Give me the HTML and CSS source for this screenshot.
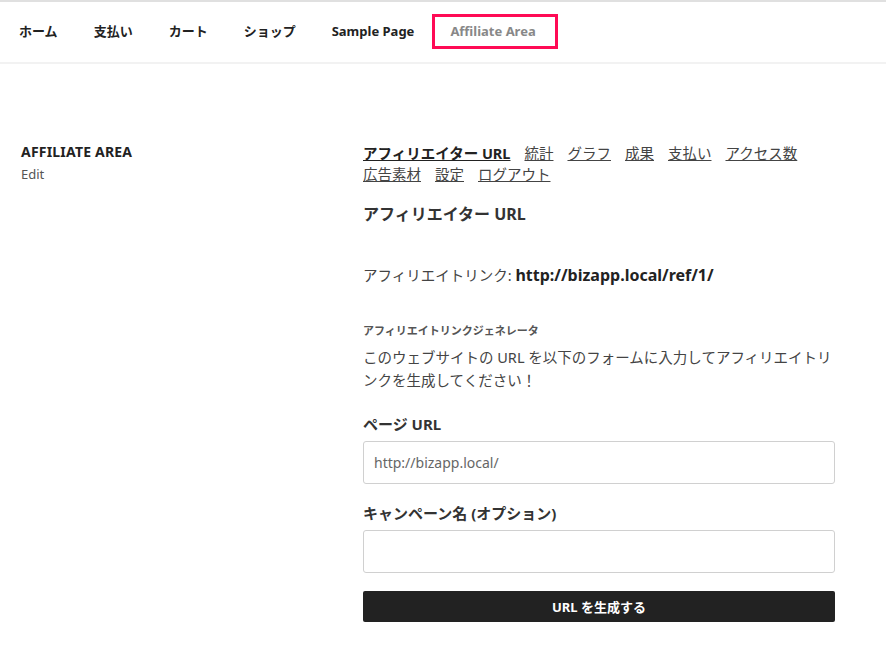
FILE: index.html
```html
<!DOCTYPE html>
<html lang="ja">
<head>
    <meta charset="UTF-8">
    <meta name="viewport" content="width=device-width, initial-scale=1.0">
    <title>Affiliate Area</title>
    <link rel="stylesheet" href="styles.css">
</head>
<body>
    <header class="site-nav">
        <ul class="menu">
            <li><a href="#">ホーム</a></li>
            <li><a href="#">支払い</a></li>
            <li><a href="#">カート</a></li>
            <li><a href="#">ショップ</a></li>
            <li><a href="#">Sample Page</a></li>
            <li class="current"><a href="#">Affiliate Area</a></li>
        </ul>
    </header>

    <main class="page">
        <aside class="sidebar">
            <h2>AFFILIATE AREA</h2>
            <a href="#" class="edit">Edit</a>
        </aside>

        <section class="affwp-area">
            <ul class="tabs">
                <li class="active"><a href="#">アフィリエイター URL</a></li>
                <li><a href="#">統計</a></li>
                <li><a href="#">グラフ</a></li>
                <li><a href="#">成果</a></li>
                <li><a href="#">支払い</a></li>
                <li><a href="#">アクセス数</a></li>
                <li><a href="#">広告素材</a></li>
                <li><a href="#">設定</a></li>
                <li><a href="#">ログアウト</a></li>
            </ul>

            <h3>アフィリエイター URL</h3>

            <p class="ref-link">アフィリエイトリンク: <strong>http://bizapp.local/ref/1/</strong></p>

            <h4>アフィリエイトリンクジェネレータ</h4>
            <p class="desc">このウェブサイトの URL を以下のフォームに入力してアフィリエイトリンクを生成してください！</p>

            <form class="generator">
                <label for="page-url">ページ URL</label>
                <input type="text" id="page-url" value="http://bizapp.local/">

                <label for="campaign">キャンペーン名 (オプション)</label>
                <input type="text" id="campaign">

                <button type="button">URL を生成する</button>
            </form>
        </section>
    </main>
</body>
</html>
```

FILE: styles.css
```css
body {
    margin: 0;
    border-top: 2px solid #e0e0e0;
    background: #fff;
    color: #333;
    font-family: "Noto Sans", "Noto Sans CJK JP", sans-serif;
}
a {
    color: inherit;
}
.site-nav {
    padding: 12px 0 13px 1px;
    border-bottom: 2px solid #f2f2f2;
}
.menu {
    display: flex;
    list-style: none;
    margin: 0;
    padding: 0;
}
.menu a {
    display: block;
    padding: 0 18px;
    height: 35px;
    line-height: 35px;
    font-size: 13px;
    font-weight: bold;
    color: #222;
    text-decoration: none;
}
.menu .current a {
    color: #888;
    padding-right: 22px;
    outline: 3px solid #ff0a55;
    outline-offset: -3px;
}
.page {
    display: grid;
    grid-template-columns: 342px 472px;
    padding: 78px 0 40px 21px;
}
.sidebar h2 {
    margin: 0;
    font-size: 14px;
    line-height: 20px;
    font-weight: bold;
    letter-spacing: 0.2px;
    color: #222;
}
.sidebar .edit {
    display: block;
    margin-top: 2px;
    font-size: 13px;
    line-height: 20px;
    color: #555;
    text-decoration: none;
}
.tabs {
    display: flex;
    flex-wrap: wrap;
    list-style: none;
    margin: 1px 0 0;
    padding: 0;
    font-size: 14.5px;
    line-height: 21px;
}
.tabs li {
    margin-right: 14px;
}
.tabs a {
    color: #444;
}
.tabs .active a {
    font-weight: bold;
    color: #222;
}
h3 {
    margin: 17px 0 0;
    font-size: 16px;
    line-height: 24px;
    color: #333;
}
.ref-link {
    margin: 38px 0 0;
    font-size: 14.5px;
    line-height: 22px;
    color: #444;
}
.ref-link strong {
    font-size: 16px;
    color: #222;
}
h4 {
    margin: 37px 0 0;
    font-size: 11px;
    line-height: 16px;
    color: #555;
}
.desc {
    margin: 7px 0 0;
    font-size: 14.5px;
    line-height: 23px;
    color: #444;
}
.generator {
    display: flex;
    flex-direction: column;
    margin-top: 21px;
}
.generator label {
    font-size: 15px;
    font-weight: bold;
    line-height: 22px;
    color: #333;
}
.generator input {
    box-sizing: border-box;
    height: 43px;
    margin: 6px 0 18px;
    padding: 0 10px;
    border: 1px solid #d0d0d0;
    border-radius: 3px;
    font-family: inherit;
    font-size: 14px;
    color: #666;
}
.generator button {
    height: 31px;
    border: 0;
    border-radius: 2px;
    background: #222;
    color: #fff;
    font-family: inherit;
    font-size: 13px;
    font-weight: bold;
}
```
